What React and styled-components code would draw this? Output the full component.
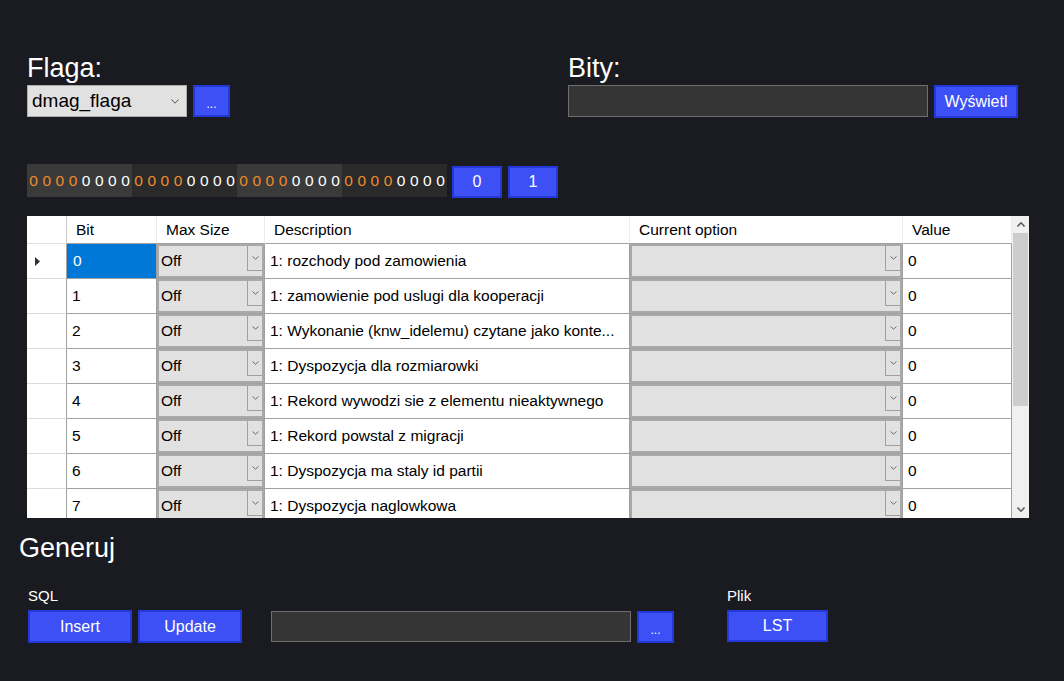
import styled, { createGlobalStyle } from 'styled-components';

const GlobalStyle = createGlobalStyle`
	html, body {
		margin: 0;
		padding: 0;
		background: #1a1b20;
	}

	body {
		font-family: 'Liberation Sans', Arial, sans-serif;
	}
`;

const Page = styled.div`
	width: 1064px;
	height: 681px;
	box-sizing: border-box;
	padding-top: 53px;
	overflow: hidden;
	color: #fff;
`;

const TopRow = styled.div`
	display: flex;
	padding-left: 27px;
`;

const Field = styled.div`
	display: flex;
	flex-direction: column;
	width: ${({ width }) => width || 'auto'};
`;

const BigLabel = styled.div`
	font-size: 27px;
	line-height: 30px;
	margin-bottom: 2px;
`;

const Inline = styled.div`
	display: flex;
	align-items: flex-start;
	gap: 6px;
`;

const Select = styled.div`
	width: 160px;
	height: 32px;
	box-sizing: border-box;
	padding: 0 7px 0 4px;

	display: flex;
	align-items: center;
	justify-content: space-between;

	background: #e1e1e1;
	border: 1px solid #adadad;
	color: #000;
	font-size: 19px;
`;

const TextBox = styled.div`
	width: ${({ width }) => width}px;
	height: ${({ height }) => height || 32}px;
	box-sizing: border-box;
	margin-left: ${({ offset }) => offset || 0}px;
	margin-bottom: ${({ lift }) => lift || 0}px;

	background: #353535;
	border: 1px solid #6e6e6e;
`;

const Button = styled.button`
	width: ${({ width }) => width}px;
	height: ${({ height }) => height || 32}px;
	box-sizing: border-box;
	padding: 0;
	margin-top: ${({ drop }) => drop || 0}px;
	margin-bottom: ${({ lift }) => lift || 0}px;

	display: flex;
	align-items: center;
	justify-content: center;

	background: #3d50f6;
	border: 2px solid #2437d9;
	color: #fff;
	font-family: inherit;
	font-size: ${({ size }) => size || 16}px;
	cursor: pointer;
`;

const Dots = styled.span`
	font-size: 12px;
	padding-top: 6px;
`;

const BitRow = styled.div`
	display: flex;
	align-items: flex-start;
	padding-left: 27px;
	margin-top: 46px;
`;

const Strip = styled.div`
	width: 420px;
	height: 33px;
	margin-right: 5px;
	display: flex;
`;

const Group = styled.div`
	flex: 1;
	display: flex;
	background: ${({ light }) => (light ? '#3a3a3a' : '#2a2a2a')};
`;

const Digit = styled.span`
	flex: 1;
	text-align: center;
	line-height: 33px;
	font-size: 15.5px;
	color: ${({ high }) => (high ? '#ee8a2c' : '#fff')};
`;

const BitButtons = styled.div`
	display: flex;
	gap: 6px;
`;

const GridWrap = styled.div`
	display: flex;
	width: 1002px;
	height: 302px;
	margin: 18px 0 0 27px;
	background: #fff;
`;

const Table = styled.div`
	flex: 1;
	overflow: hidden;
	color: #000;
	font-size: 15.5px;
`;

const Row = styled.div`
	display: grid;
	grid-template-columns: 40px 90px 108px 365px 273px 109px;
	height: ${({ head }) => (head ? 28 : 35)}px;
`;

const HeadCell = styled.div`
	box-sizing: border-box;
	padding-left: 9px;
	display: flex;
	align-items: center;
	border-right: 1px solid ${({ corner }) => (corner ? '#c8c8c8' : '#ececec')};
	border-bottom: 1px solid ${({ corner }) => (corner ? '#e0e0e0' : '#a0a0a0')};
`;

const RowHeader = styled.div`
	box-sizing: border-box;
	padding-left: 8px;
	display: flex;
	align-items: center;
	border-right: 1px solid #a0a0a0;
	border-bottom: 1px solid #dcdcdc;
`;

const Cell = styled.div`
	box-sizing: border-box;
	padding-left: ${({ selected }) => (selected ? 6 : 5)}px;
	display: flex;
	align-items: center;
	white-space: nowrap;
	overflow: hidden;
	border-right: 1px solid #a0a0a0;
	border-bottom: 1px solid #a0a0a0;
	background: ${({ selected }) => (selected ? '#0078d7' : '#fff')};
	color: ${({ selected }) => (selected ? '#fff' : '#000')};
`;

const ComboCell = styled.div`
	box-sizing: border-box;
	padding-left: 4px;
	display: flex;
	align-items: flex-start;
	border-right: 1px solid #a0a0a0;
	border-bottom: 1px solid #a0a0a0;
	background: #e1e1e1;
	box-shadow: inset 0 0 0 2px #a9a9a9;
`;

const ComboText = styled.span`
	flex: 1;
	line-height: 34px;
`;

const DropButton = styled.div`
	width: 15px;
	height: 25px;
	box-sizing: border-box;
	margin: 2px 2px 0 0;
	display: flex;
	align-items: center;
	justify-content: center;
	border-left: 1px solid #a0a0a0;
	border-bottom: 1px solid #a0a0a0;
`;

const Scrollbar = styled.div`
	width: 17px;
	display: flex;
	flex-direction: column;
	background: #f0f0f0;
`;

const ScrollArrow = styled.div`
	height: 17px;
	display: flex;
	align-items: center;
	justify-content: center;
`;

const Thumb = styled.div`
	height: 173px;
	margin: 0 1px;
	background: #cdcdcd;
`;

const Spacer = styled.div`
	flex: 1;
`;

const SectionTitle = styled.div`
	margin: 15px 0 0 19px;
	font-size: 27px;
	line-height: 30px;
`;

const BottomRow = styled.div`
	display: flex;
	align-items: flex-end;
	padding-left: 28px;
	margin-top: 24px;
`;

const SmallLabel = styled.div`
	font-size: 15px;
	line-height: 17px;
	margin-bottom: 6px;
`;

const Group2 = styled.div`
	display: flex;
	flex-direction: column;
	margin-left: ${({ offset }) => offset || 0}px;
`;

const Chevron = ({ width = 7, height = 4, color = '#6a6a6a', up, stroke = 1 }) => (
	<svg width={width} height={height} viewBox={`0 0 ${width} ${height}`}>
		<polyline
			points={
				up
					? `0.5,${height - 0.5} ${width / 2},0.8 ${width - 0.5},${height - 0.5}`
					: `0.5,0.5 ${width / 2},${height - 0.8} ${width - 0.5},0.5`
			}
			fill='none'
			stroke={color}
			strokeWidth={stroke}
		/>
	</svg>
);

const rows = [
	'1: rozchody pod zamowienia',
	'1: zamowienie pod uslugi dla kooperacji',
	'1: Wykonanie (knw_idelemu) czytane jako konte...',
	'1: Dyspozycja dla rozmiarowki',
	'1: Rekord wywodzi sie z elementu nieaktywnego',
	'1: Rekord powstal z migracji',
	'1: Dyspozycja ma staly id partii',
	'1: Dyspozycja naglowkowa',
];

const App = () => {
	return (
		<>
			<GlobalStyle />
			<Page>
				<TopRow>
					<Field width='541px'>
						<BigLabel>Flaga:</BigLabel>
						<Inline>
							<Select>
								<span>dmag_flaga</span>
								<Chevron width={8} height={5} color='#555' />
							</Select>
							<Button width={37}>
								<Dots>...</Dots>
							</Button>
						</Inline>
					</Field>
					<Field>
						<BigLabel>Bity:</BigLabel>
						<Inline>
							<TextBox width={360} />
							<Button width={84} height={33}>
								Wyświetl
							</Button>
						</Inline>
					</Field>
				</TopRow>

				<BitRow>
					<Strip>
						{[0, 1, 2, 3].map((g) => (
							<Group key={g} light={g % 2 === 0}>
								{[0, 1, 2, 3, 4, 5, 6, 7].map((d) => (
									<Digit key={d} high={d < 4}>
										0
									</Digit>
								))}
							</Group>
						))}
					</Strip>
					<BitButtons>
						<Button width={50} drop={2}>
							0
						</Button>
						<Button width={50} drop={2}>
							1
						</Button>
					</BitButtons>
				</BitRow>

				<GridWrap>
					<Table>
						<Row head>
							<HeadCell corner />
							<HeadCell>Bit</HeadCell>
							<HeadCell>Max Size</HeadCell>
							<HeadCell>Description</HeadCell>
							<HeadCell>Current option</HeadCell>
							<HeadCell>Value</HeadCell>
						</Row>
						{rows.map((text, i) => (
							<Row key={i}>
								<RowHeader>
									{i === 0 && (
										<svg width='5' height='9' viewBox='0 0 5 9'>
											<polygon points='0,0 5,4.5 0,9' fill='#333' />
										</svg>
									)}
								</RowHeader>
								<Cell selected={i === 0}>{i}</Cell>
								<ComboCell>
									<ComboText>Off</ComboText>
									<DropButton>
										<Chevron />
									</DropButton>
								</ComboCell>
								<Cell>{text}</Cell>
								<ComboCell>
									<ComboText />
									<DropButton>
										<Chevron />
									</DropButton>
								</ComboCell>
								<Cell>0</Cell>
							</Row>
						))}
					</Table>
					<Scrollbar>
						<ScrollArrow>
							<Chevron up width={8} height={5} color='#606060' stroke={1.6} />
						</ScrollArrow>
						<Thumb />
						<Spacer />
						<ScrollArrow>
							<Chevron width={8} height={5} color='#606060' stroke={1.6} />
						</ScrollArrow>
					</Scrollbar>
				</GridWrap>

				<SectionTitle>Generuj</SectionTitle>

				<BottomRow>
					<Group2>
						<SmallLabel>SQL</SmallLabel>
						<Inline>
							<Button width={104} height={33}>
								Insert
							</Button>
							<Button width={104} height={33}>
								Update
							</Button>
						</Inline>
					</Group2>
					<TextBox width={360} height={31} offset={29} lift={1} />
					<Group2 offset={6}>
						<Button width={37}>
							<Dots>...</Dots>
						</Button>
					</Group2>
					<Group2 offset={53}>
						<SmallLabel>Plik</SmallLabel>
						<Button width={101} lift={1}>
							LST
						</Button>
					</Group2>
				</BottomRow>
			</Page>
		</>
	);
};

export default App;
